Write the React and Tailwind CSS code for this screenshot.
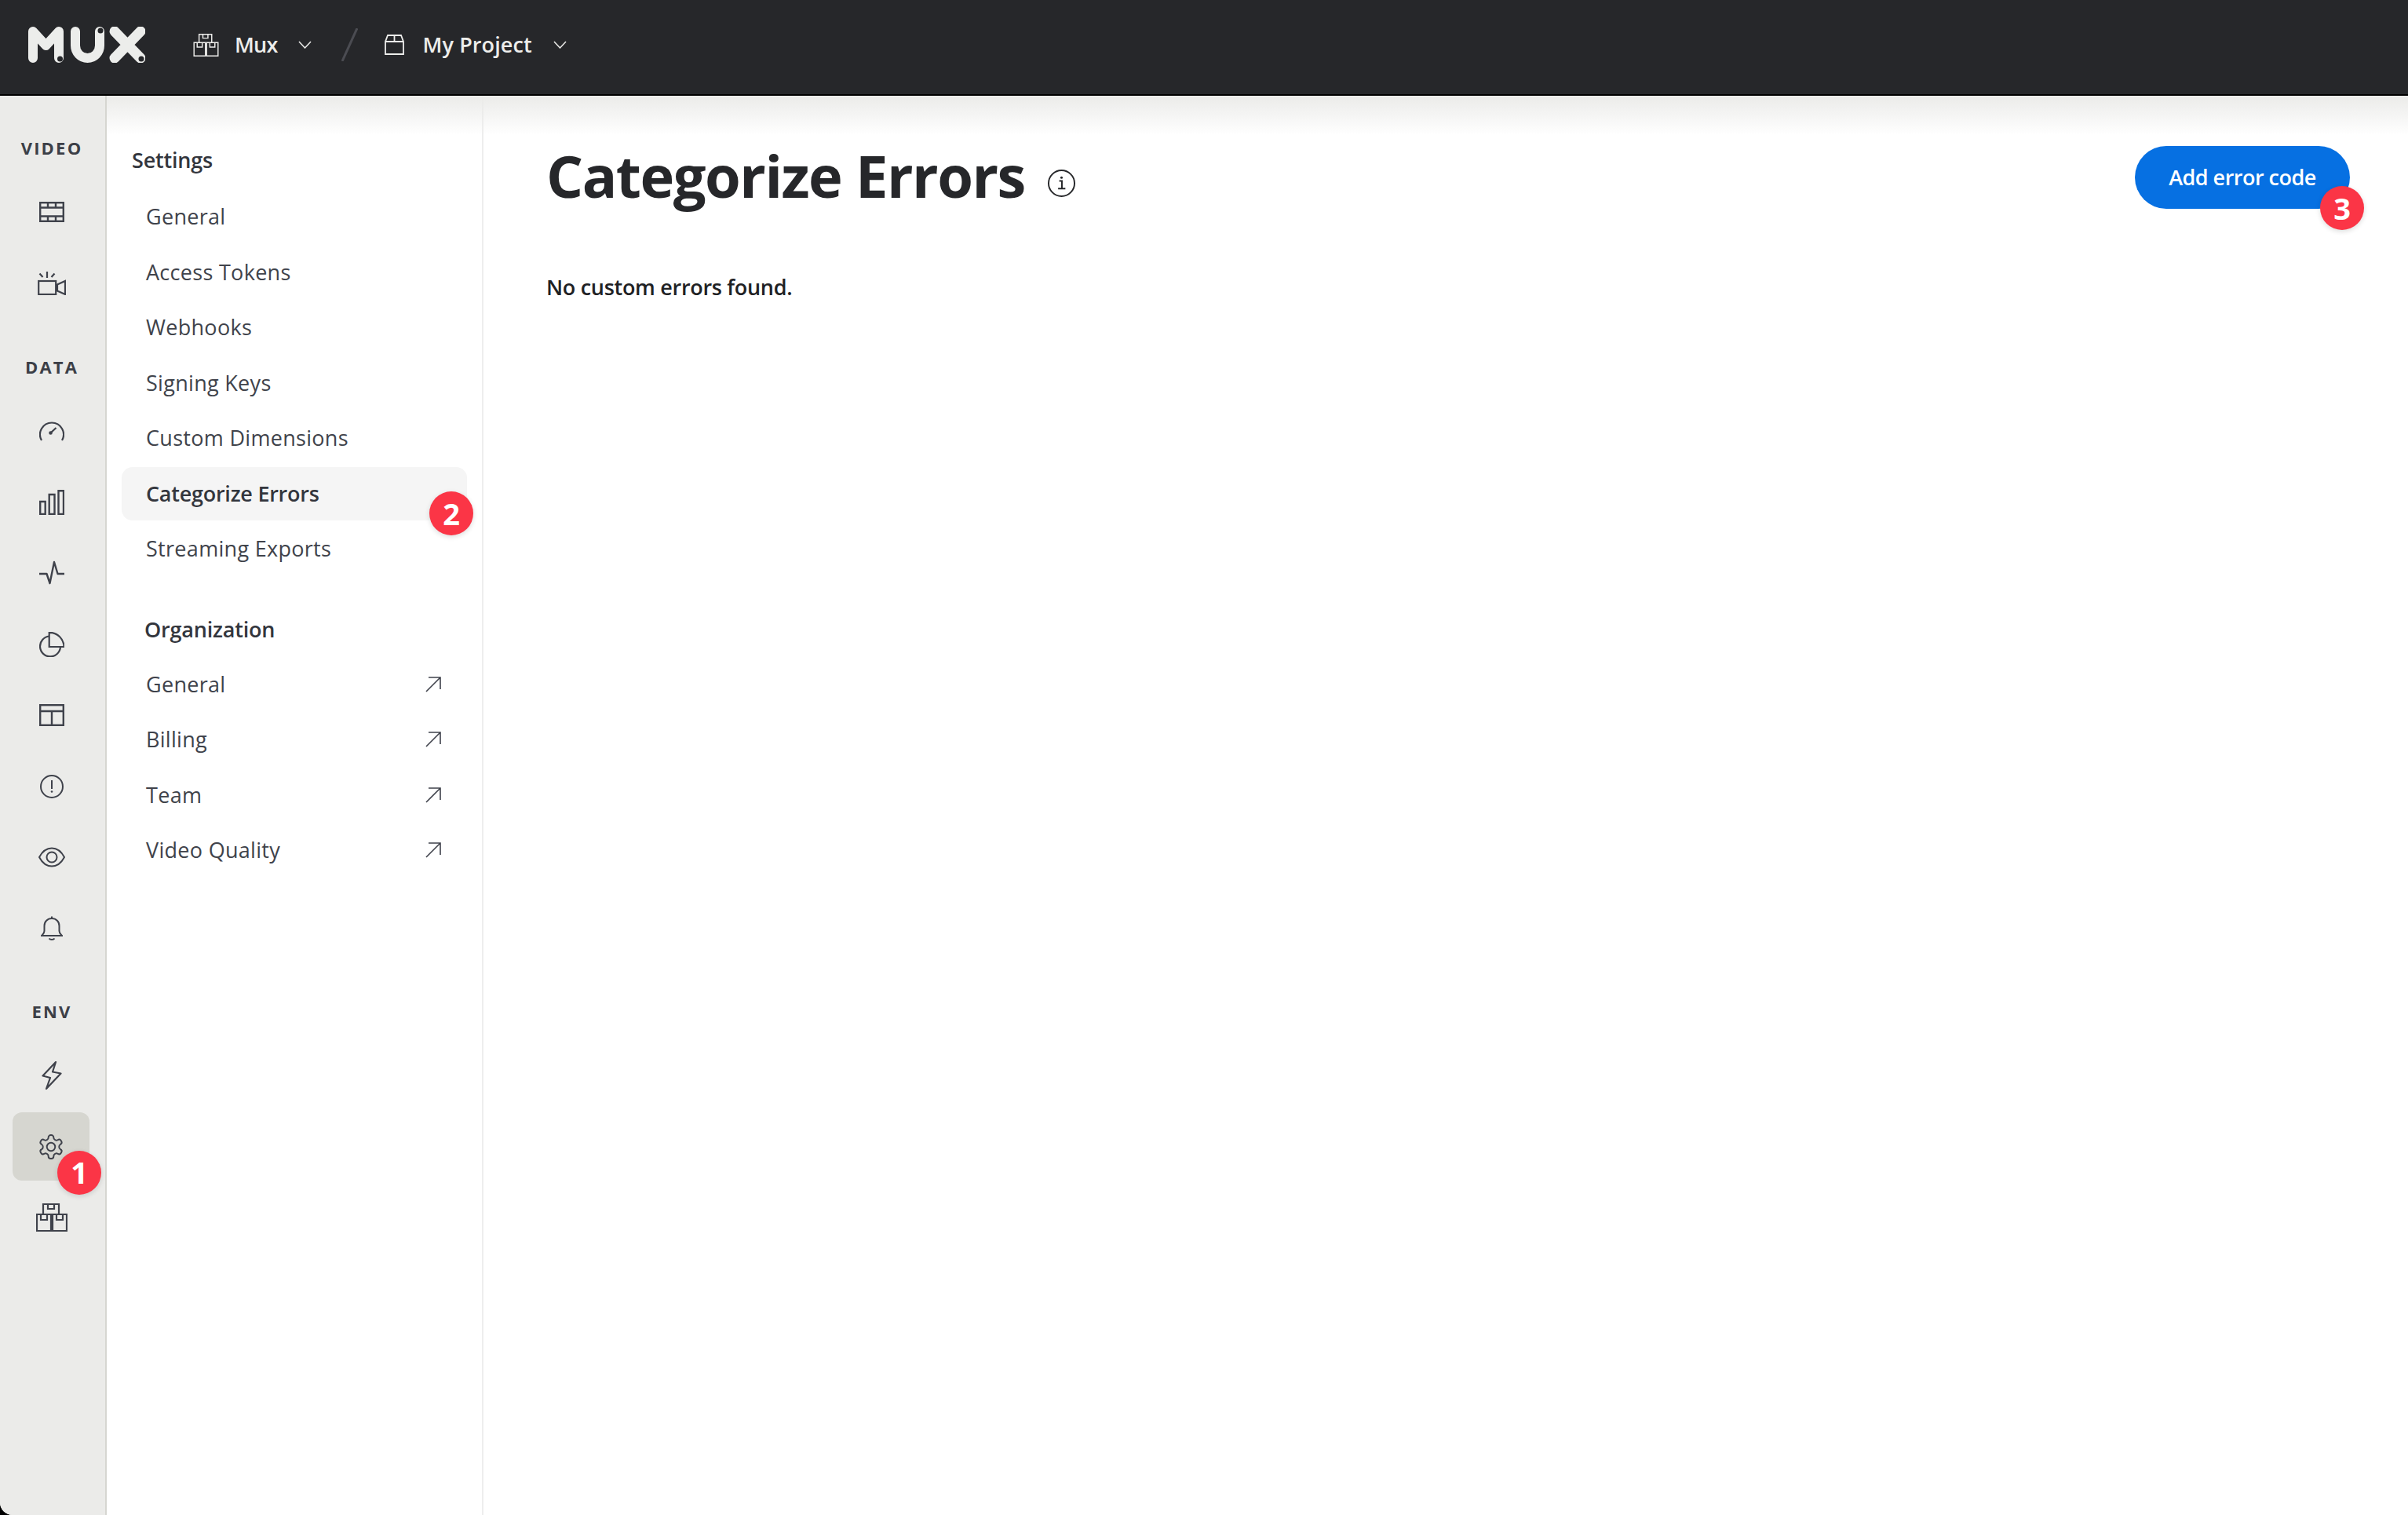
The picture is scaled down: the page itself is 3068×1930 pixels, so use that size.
import React from "react";

const S = ({ w, h, vb, sw = 2, children, className = "" }) => (
  <svg width={w} height={h} viewBox={vb || `0 0 ${w} ${h}`} fill="none" stroke="currentColor" strokeWidth={sw} className={className}>
    {children}
  </svg>
);

const Boxes = ({ w = 40, h = 36, sw = 2.2 }) => (
  <S w={w} h={h} vb="0 0 40 36" sw={sw}>
    <path d="M9 14V1h20v13" />
    <path d="M15 1v6h8V1" />
    <path d="M1 14h18v21H1zM21 14h18v21H21z" />
    <path d="M6 14v7h8v-7M26 14v7h8v-7" />
  </S>
);

const icons = {
  film: (
    <S w={32} h={26} sw={2.4}>
      <rect x="1.2" y="1.2" width="29.6" height="23.6" />
      <path d="M1 7.5h30M1 18.5h30M11 1v6M21 1v6M11 19v6M21 19v6" />
    </S>
  ),
  live: (
    <S w={36} h={30} sw={2.2}>
      <rect x="1.2" y="12" width="22" height="17" />
      <path d="M35 12v17l-10-4.5v-8zM12 0v8M2.5 2.5l4 4.5M21.5 2.5l-4 4.5" />
    </S>
  ),
  gauge: (
    <S w={32} h={26} sw={2.2}>
      <path d="M3 25a15 15 0 1 1 26 0" />
      <path d="M14.5 15.5l7-6.5" />
      <circle cx="14.5" cy="15.5" r="1.2" fill="currentColor" />
    </S>
  ),
  bars: (
    <S w={32} h={32} sw={2.4}>
      <path d="M1.2 31V15h6.5v16zM12.7 31V6h6.800v25zM24.5 31V1.2h6.500V31z" />
    </S>
  ),
  pulse: (
    <S w={32} h={32} sw={2.4}>
      <path d="M0 17h9.5l4 12L19 2l4.5 15H32" strokeLinejoin="round" />
    </S>
  ),
  pie: (
    <S w={32} h={32} sw={2.2}>
      <path d="M27 19A13 13 0 1 1 12.7 5.500" />
      <path d="M12.7 0.800A18.500 18.500 0 0 1 31.500 19H12.700z" />
    </S>
  ),
  table: (
    <S w={32} h={28} sw={2.4}>
      <rect x="1.2" y="1.2" width="29.6" height="25.6" />
      <path d="M1 9h30M16 9v18" />
    </S>
  ),
  alert: (
    <S w={30} h={30} sw={2}>
      <circle cx="15" cy="15" r="14" />
      <path d="M15 7v11" />
      <circle cx="15" cy="21.5" r="1.3" fill="currentColor" stroke="none" />
    </S>
  ),
  eye: (
    <S w={34} h={26} sw={2}>
      <path d="M1 13C5 5.500 10.500 1.500 17 1.500S29 5.500 33 13c-4 7.500-9.500 11.500-16 11.500S5 20.500 1 13z" />
      <circle cx="17" cy="13" r="6.5" />
    </S>
  ),
  bell: (
    <S w={28} h={32} sw={2}>
      <path d="M1 25h26c-1.500-1.500-3.500-3-3.500-6v-6.500C23.500 7 19.500 3 14 3S4.500 7 4.500 12.500V19C4.500 22 2.500 23.500 1 25z" />
      <path d="M14 3V0.500M10.500 28.500c1.500 2 5.500 2 7 0" />
    </S>
  ),
  bolt: (
    <S w={26} h={36} sw={2.2}>
      <path d="M18 1L1.500 18.500 11 21 6 35 24.500 15.500 14 13.500z" strokeLinejoin="round" />
    </S>
  ),
  gear: (
    <S w={36} h={36} vb="0 0 24 24" sw={1.3}>
      <path d="M12.220 2h-.440a2 2 0 0 0-2 2v.180a2 2 0 0 1-1 1.730l-.430.250a2 2 0 0 1-2 0l-.150-.080a2 2 0 0 0-2.730.730l-.220.380a2 2 0 0 0 .730 2.730l.150.100a2 2 0 0 1 1 1.720v.510a2 2 0 0 1-1 1.740l-.150.090a2 2 0 0 0-.730 2.730l.220.380a2 2 0 0 0 2.730.730l.150-.080a2 2 0 0 1 2 0l.430.250a2 2 0 0 1 1 1.730V20a2 2 0 0 0 2 2h.440a2 2 0 0 0 2-2v-.180a2 2 0 0 1 1-1.730l.430-.250a2 2 0 0 1 2 0l.150.080a2 2 0 0 0 2.730-.730l.220-.390a2 2 0 0 0-.730-2.730l-.150-.080a2 2 0 0 1-1-1.740v-.500a2 2 0 0 1 1-1.740l.150-.090a2 2 0 0 0 .730-2.730l-.220-.380a2 2 0 0 0-2.730-.730l-.150.080a2 2 0 0 1-2 0l-.430-.250a2 2 0 0 1-1-1.730V4a2 2 0 0 0-2-2z" />
      <circle cx="12" cy="12" r="3.5" />
    </S>
  ),
  boxes: <Boxes />,
};

const font = "font-['Open_Sans','Liberation_Sans',sans-serif]";

const RailLabel = ({ children, mt }) => (
  <div className={`h-[70px] flex items-center justify-center pb-[3px] text-[22px] font-bold tracking-[2.2px] text-[#3c3f47] ${mt}`}>
    {children}
  </div>
);

const RailIcon = ({ name }) => (
  <div className="h-[90.5px] flex items-center justify-center text-[#3f424b]">{icons[name]}</div>
);

const Badge = ({ n, className }) => (
  <div className={`absolute w-[56px] h-[56px] rounded-full bg-[#fb3546] text-white text-[38px] font-bold flex items-center justify-center shadow-[0_2px_6px_rgba(0,0,0,0.14)] ${className}`}>
    {n}
  </div>
);

const Arrow = () => (
  <S w={20} h={20} sw={1.6} className="text-[#3f424b]">
    <path d="M1 19L19 1M4 1h15v15" />
  </S>
);

const NavRow = ({ label, active, ext }) => (
  <div className="h-[70.5px] flex items-center">
    <div className={`w-[440px] ml-[19px] h-[68px] rounded-[14px] pl-[31px] pr-[33px] flex items-center justify-between text-[27px] ${active ? "bg-[#f5f5f5] font-semibold text-[#33363d] tracking-[-0.25px]" : "text-[#40434b] tracking-[0.3px]"}`}>
      <span>{label}</span>
      {ext && <Arrow />}
    </div>
  </div>
);

const Chevron = () => (
  <S w={17} h={10} sw={1.6} className="text-[#e6e6e4]">
    <path d="M1 1l7.5 8L16 1" />
  </S>
);

export default function App() {
  return (
    <div className={`w-[3068px] h-[1930px] bg-black overflow-hidden flex flex-col ${font}`}>
      <header className="h-[122px] shrink-0 bg-[#26272a] border-b-2 border-black flex items-center pl-[36px] text-[#ededeb] relative">
        <svg width="149" height="46" viewBox="36 34 149 46" fill="none" stroke="#ecedeb" strokeWidth="12" strokeLinecap="round" strokeLinejoin="round" className="mt-[-6px] shrink-0">
          <path d="M42 74V40L58.500 58 75 40v34" />
          <path d="M96 40v18a15.500 16 0 0 0 31 0V40" />
          <path d="M146 40l33 34M179 40l-33 34" strokeWidth="13" />
          <g fill="#26272a" stroke="none">
            <circle cx="76.500" cy="75" r="3.500" />
            <circle cx="128" cy="39" r="3.500" />
            <circle cx="180" cy="75" r="3.500" />
          </g>
        </svg>
        <div className="flex items-center ml-[61px] mt-[-5px]">
          <Boxes w={33} h={29} sw={1.8} />
        </div>
        <span className="ml-[20px] text-[27px] font-semibold tracking-[-0.8px] text-[#ededeb] mt-[-6px]">Mux</span>
        <div className="ml-[26px] mt-[-6px]"><Chevron /></div>
        <svg width="21" height="42" className="ml-[38px] mt-[-6px]"><path d="M20 0L1 42" stroke="#4b4c52" strokeWidth="3" /></svg>
        <S w={25} h={26} sw={1.8} className="ml-[34px] mt-[-6px]">
          <path d="M1 25V9l3-8h17l3 8v16zM1 9h23M12.500 1v8" />
        </S>
        <span className="ml-[24px] text-[27px] font-semibold tracking-[0.1px] text-[#ededeb] mt-[-6px]">My Project</span>
        <div className="ml-[27px] mt-[-6px]"><Chevron /></div>
      </header>

      <div className="flex-1 flex bg-white relative overflow-hidden rounded-bl-[16px]">
        <div className="absolute left-[136px] right-0 top-0 h-[50px] bg-gradient-to-b from-[#ebebe9] to-transparent z-10" />

        <aside className="w-[136px] shrink-0 bg-[#ebebe9] border-r-2 border-[#d6d6d1] pr-[2px] relative">
          <RailLabel mt="mt-[33px]">VIDEO</RailLabel>
          <RailIcon name="film" />
          <RailIcon name="live" />
          <RailLabel mt="mt-[28px]">DATA</RailLabel>
          <RailIcon name="gauge" />
          <RailIcon name="bars" />
          <RailIcon name="pulse" />
          <RailIcon name="pie" />
          <RailIcon name="table" />
          <RailIcon name="alert" />
          <RailIcon name="eye" />
          <RailIcon name="bell" />
          <RailLabel mt="mt-[27px]">ENV</RailLabel>
          <RailIcon name="bolt" />
          <div className="h-[90.5px] flex items-center justify-center text-[#3f424b] relative">
            <div className="w-[98px] h-[87px] rounded-[12px] bg-[#d6d6d0] flex items-center justify-center mr-[2px]">
              {icons.gear}
            </div>
            <Badge n="1" className="left-[73px] top-[50px]" />
          </div>
          <RailIcon name="boxes" />
        </aside>

        <nav className="w-[480px] shrink-0 border-r-2 border-[#eeeeee] relative">
          <div className="h-[72px] mt-[46px] mb-[1px] pl-[32px] flex items-center text-[27px] font-semibold tracking-[-0.2px] text-[#33363d]">Settings</div>
          <NavRow label="General" />
          <NavRow label="Access Tokens" />
          <NavRow label="Webhooks" />
          <NavRow label="Signing Keys" />
          <NavRow label="Custom Dimensions" />
          <NavRow label="Categorize Errors" active />
          <NavRow label="Streaming Exports" />
          <div className="h-[74px] mt-[31px] mb-[-3px] pl-[48px] flex items-center text-[27px] font-semibold tracking-[-0.2px] text-[#33363d]">Organization</div>
          <NavRow label="General" ext />
          <NavRow label="Billing" ext />
          <NavRow label="Team" ext />
          <NavRow label="Video Quality" ext />
          <Badge n="2" className="left-[411px] top-[504px]" />
        </nav>

        <main className="flex-1 pl-[80px] pr-[74px] pt-[64px]">
          <div className="flex items-start justify-between">
            <div className="flex items-center gap-[29px] h-[76px]">
              <h1 className="text-[74px] font-bold tracking-[-1.5px] text-[#26272a] leading-none">Categorize Errors</h1>
              <svg width="35" height="35" viewBox="0 0 36 36" fill="none" stroke="#26272a" strokeWidth="2" className="mt-[18px]">
                <circle cx="18" cy="18" r="17" />
                <path d="M15 15h3.5v9M13.5 25h9.5" />
                <circle cx="18" cy="10.5" r="1.6" fill="#26272a" stroke="none" />
              </svg>
            </div>
            <div className="relative">
              <button className="w-[274px] h-[80px] rounded-full bg-[#0670e2] text-white text-[27px] font-semibold tracking-[-0.5px] flex items-center justify-center">
                Add error code
              </button>
              <Badge n="3" className="left-[236px] top-[51px]" />
            </div>
          </div>
          <p className="mt-[80px] text-[27px] font-semibold tracking-[-0.3px] text-[#202124]">No custom errors found.</p>
        </main>
      </div>
    </div>
  );
}
